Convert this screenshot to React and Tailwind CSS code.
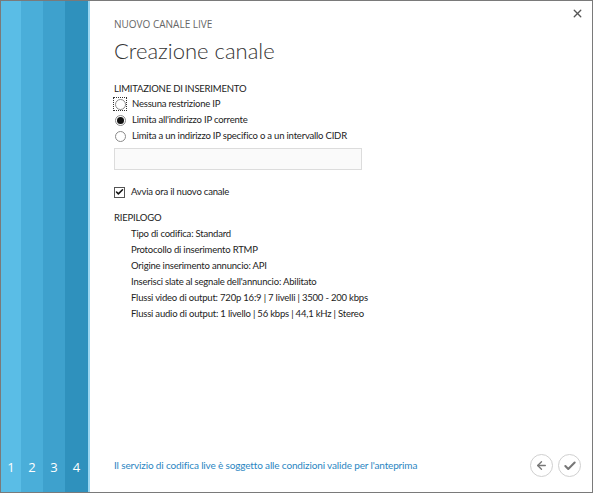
import { X, ArrowLeft, Check } from "lucide-react";

const stripes = [
  { n: 1, w: "w-[20px]", bg: "bg-[#5abde6]" },
  { n: 2, w: "w-[22px]", bg: "bg-[#4aaed9]" },
  { n: 3, w: "w-[22px]", bg: "bg-[#3ea1cd]" },
  { n: 4, w: "w-[23px]", bg: "bg-[#2f91bd]" },
];

const summary = [
  "Tipo di codifica: Standard",
  "Protocollo di inserimento RTMP",
  "Origine inserimento annuncio: API",
  "Inserisci slate al segnale dell'annuncio: Abilitato",
  "Flussi video di output: 720p 16:9 | 7 livelli | 3500 - 200 kbps",
  "Flussi audio di output: 1 livello | 56 kbps | 44,1 kHz | Stereo",
];

function Radio({ checked, focused, label }) {
  return (
    <div className="flex items-center h-4">
      <span className={`flex items-center justify-center w-[12px] h-[12px] ${focused ? "outline outline-1 outline-dotted outline-[#333]" : ""}`}>
        <span className="w-[11px] h-[11px] rounded-full border border-[#8a8a8a] bg-white flex items-center justify-center">
          {checked && <span className="w-[7px] h-[7px] rounded-full bg-[#111]" />}
        </span>
      </span>
      <span className="ml-[6px]">{label}</span>
    </div>
  );
}

export default function App() {
  return (
    <div
      className="w-[593px] h-[493px] border border-[#7a7a7a] flex bg-white text-[#222] text-[9.5px] tracking-[-0.2px]"
      style={{ fontFamily: 'Lato, "Open Sans", sans-serif' }}
    >
      <div className="flex border-r-2 border-[#9ad6f1]">
        {stripes.map((s) => (
          <div key={s.n} className={`${s.w} ${s.bg} flex flex-col justify-end items-center pb-[15px]`}>
            <span className="text-white text-[13px] tracking-normal" style={{ fontFamily: '"Open Sans", sans-serif' }}>{s.n}</span>
          </div>
        ))}
      </div>

      <div className="flex-1 flex flex-col pl-[24px] pr-[8px] relative">
        <button className="absolute right-[8px] top-[6px] text-[#555]">
          <X size={13} strokeWidth={2.5} />
        </button>

        <div className="mt-[16px] text-[10px] text-[#666] tracking-normal" style={{ fontFamily: '"Open Sans", sans-serif' }}>NUOVO CANALE LIVE</div>
        <div className="mt-[5px] text-[22px] font-light text-[#333] leading-[28px] tracking-normal">Creazione canale</div>

        <div className="mt-[16px] h-[15px] leading-[15px]">LIMITAZIONE DI INSERIMENTO</div>
        <div className="flex flex-col">
          <Radio focused label="Nessuna restrizione IP" />
          <Radio checked label="Limita all'indirizzo IP corrente" />
          <Radio label="Limita a un indirizzo IP specifico o a un intervallo CIDR" />
        </div>
        <div className="mt-[4px] w-[248px] h-[22px] border border-[#dcdcdc] bg-[#fafafa]" />

        <div className="mt-[14px] flex items-center h-4">
          <span className="w-[11px] h-[11px] border border-[#555] flex items-center justify-center bg-white">
            <Check size={10} strokeWidth={4} className="text-[#111]" />
          </span>
          <span className="ml-[6px]">Avvia ora il nuovo canale</span>
        </div>

        <div className="mt-[10px] leading-4">RIEPILOGO</div>
        <div className="flex flex-col pl-[17px]">
          {summary.map((t) => (
            <div key={t} className="h-4 leading-4">{t}</div>
          ))}
        </div>

        <div className="flex-1" />
        <div className="flex items-center justify-between mb-[15px]">
          <span className="text-[#2a86c2] text-[10px] tracking-[-0.15px]">Il servizio di codifica live è soggetto alle condizioni valide per l'anteprima</span>
          <div className="flex gap-[5px] mr-[3px]">
            <span className="w-[23px] h-[23px] rounded-full border-[1.5px] border-[#d0d0d0] flex items-center justify-center text-[#777]">
              <ArrowLeft size={13} strokeWidth={2.5} />
            </span>
            <span className="w-[23px] h-[23px] rounded-full border-[1.5px] border-[#d0d0d0] flex items-center justify-center text-[#777]">
              <Check size={14} strokeWidth={3.5} />
            </span>
          </div>
        </div>
      </div>
    </div>
  );
}
